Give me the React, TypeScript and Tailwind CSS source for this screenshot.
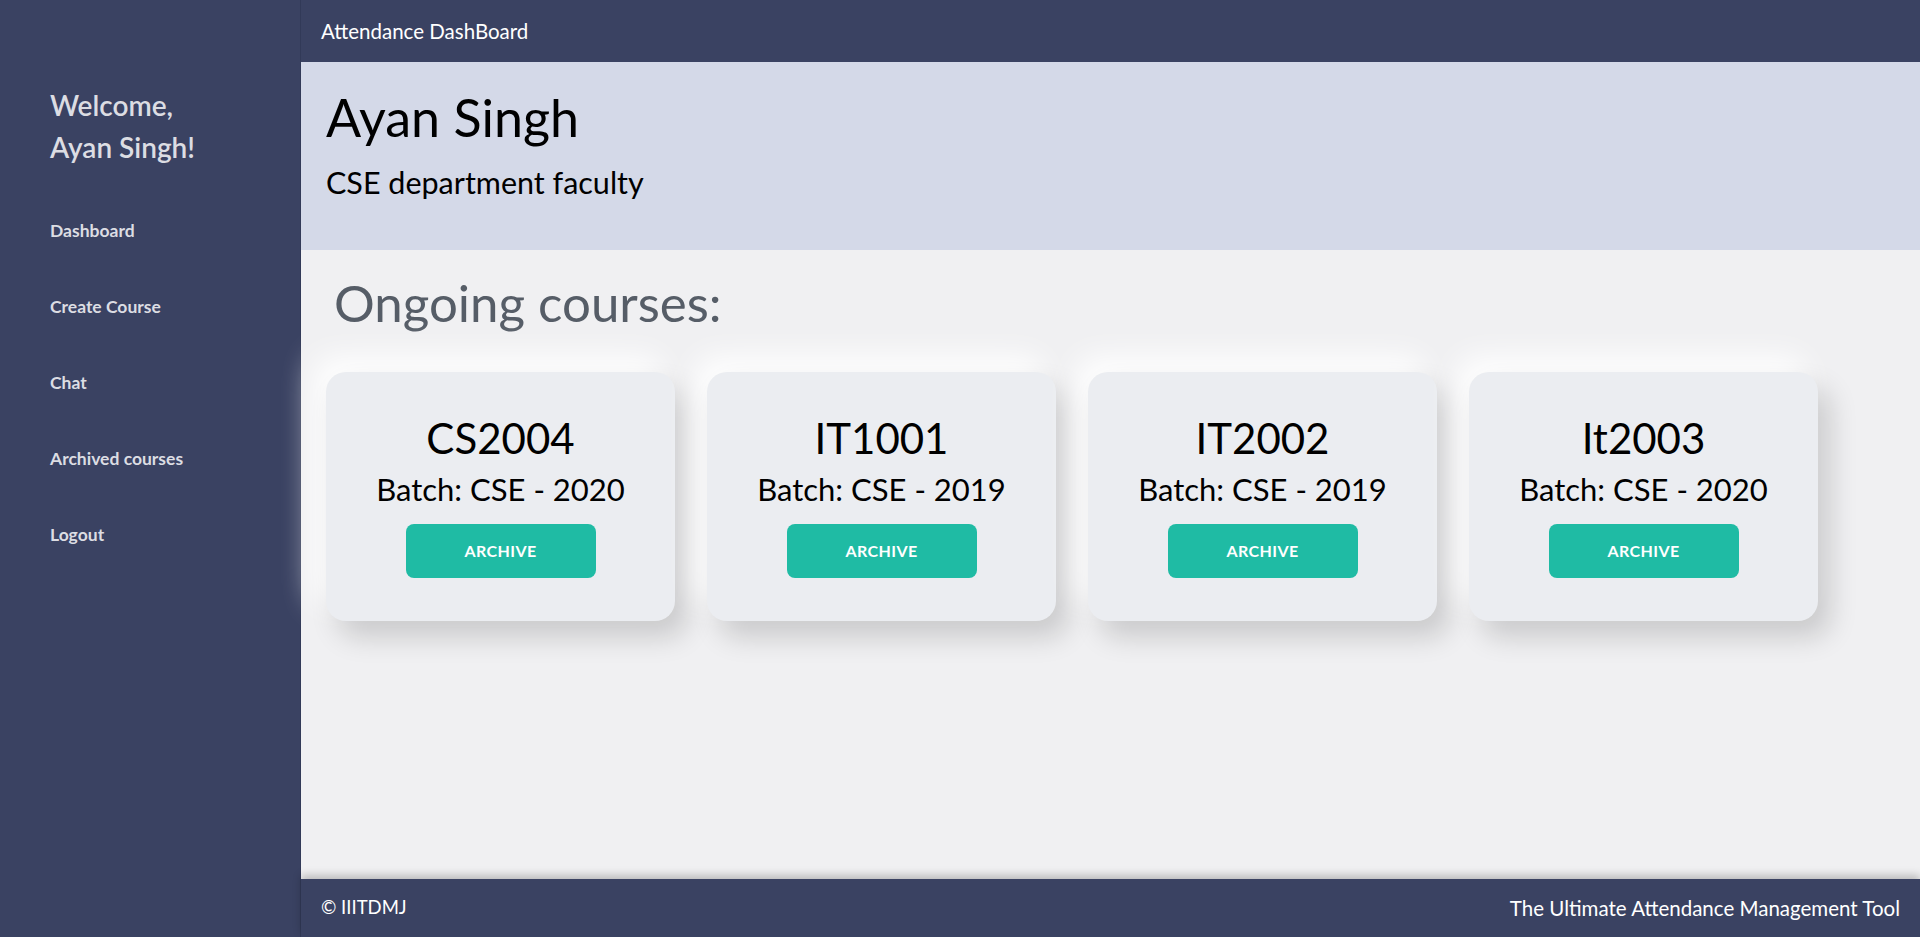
const courses = [
  { code: 'CS2004', batch: 'CSE - 2020' },
  { code: 'IT1001', batch: 'CSE - 2019' },
  { code: 'IT2002', batch: 'CSE - 2019' },
  { code: 'It2003', batch: 'CSE - 2020' },
];

const navItems = ['Dashboard', 'Create Course', 'Chat', 'Archived courses', 'Logout'];

function CourseCard({ code, batch }: { code: string; batch: string }) {
  return (
    <div className="flex h-[249px] w-[349px] flex-col items-center rounded-[20px] bg-[#ebedf1] pt-[40px] shadow-[12px_16px_28px_rgba(0,0,0,0.16),-12px_-16px_30px_rgba(255,255,255,0.95)]">
      <h2 className="text-[42px] leading-[52px] text-black">{code}</h2>
      <p className="mt-[5px] text-[31px] leading-[40px] text-black">Batch: {batch}</p>
      <button className="mt-[15px] h-[54px] w-[190px] rounded-[8px] bg-[#1fbba4] text-[16px] font-bold uppercase tracking-wide text-white">
        Archive
      </button>
    </div>
  );
}

export default function App() {
  return (
    <div className="flex h-[937px] w-full overflow-hidden font-['Lato',sans-serif]">
      <aside className="flex h-full w-[300px] shrink-0 flex-col bg-[#3a4262] pl-[50px] pt-[84px]">
        <h1 className="text-[28px] font-semibold leading-[42px] text-[#dcdde3]">
          Welcome,
          <br />
          Ayan Singh!
        </h1>
        <nav className="mt-[52px] flex flex-col gap-[54px]">
          {navItems.map((item) => (
            <a key={item} href="#" className="text-[17.5px] font-bold leading-[22px] text-[#dcdde3]">
              {item}
            </a>
          ))}
        </nav>
      </aside>

      <div className="flex min-w-0 flex-1 flex-col border-l border-[#323a58] bg-[#f0f0f2]">
        <header className="flex h-[62px] shrink-0 items-center bg-[#3a4262] px-[20px]">
          <span className="text-[20.5px] text-white">Attendance DashBoard</span>
        </header>

        <section className="h-[188px] shrink-0 bg-[#d4d9e8] px-[25px] pt-[23px]">
          <h1 className="text-[52px] leading-[64px] text-black">Ayan Singh</h1>
          <p className="mt-[15px] text-[30.5px] leading-[36px] text-black">CSE department faculty</p>
        </section>

        <main className="flex-1 px-[25px] pt-[22px]">
          <h2 className="pl-[8px] text-[51px] leading-[62px] text-[#565d67]">Ongoing courses:</h2>
          <div className="mt-[38px] flex gap-[32px]">
            {courses.map((c) => (
              <CourseCard key={c.code} code={c.code} batch={c.batch} />
            ))}
          </div>
        </main>

        <footer className="flex h-[58px] shrink-0 items-center justify-between bg-[#3a4262] px-[20px] shadow-[0_-4px_8px_rgba(0,0,0,0.22)]">
          <span className="text-[18.5px] text-white">© IIITDMJ</span>
          <span className="text-[20.5px] text-white">The Ultimate Attendance Management Tool</span>
        </footer>
      </div>
    </div>
  );
}
